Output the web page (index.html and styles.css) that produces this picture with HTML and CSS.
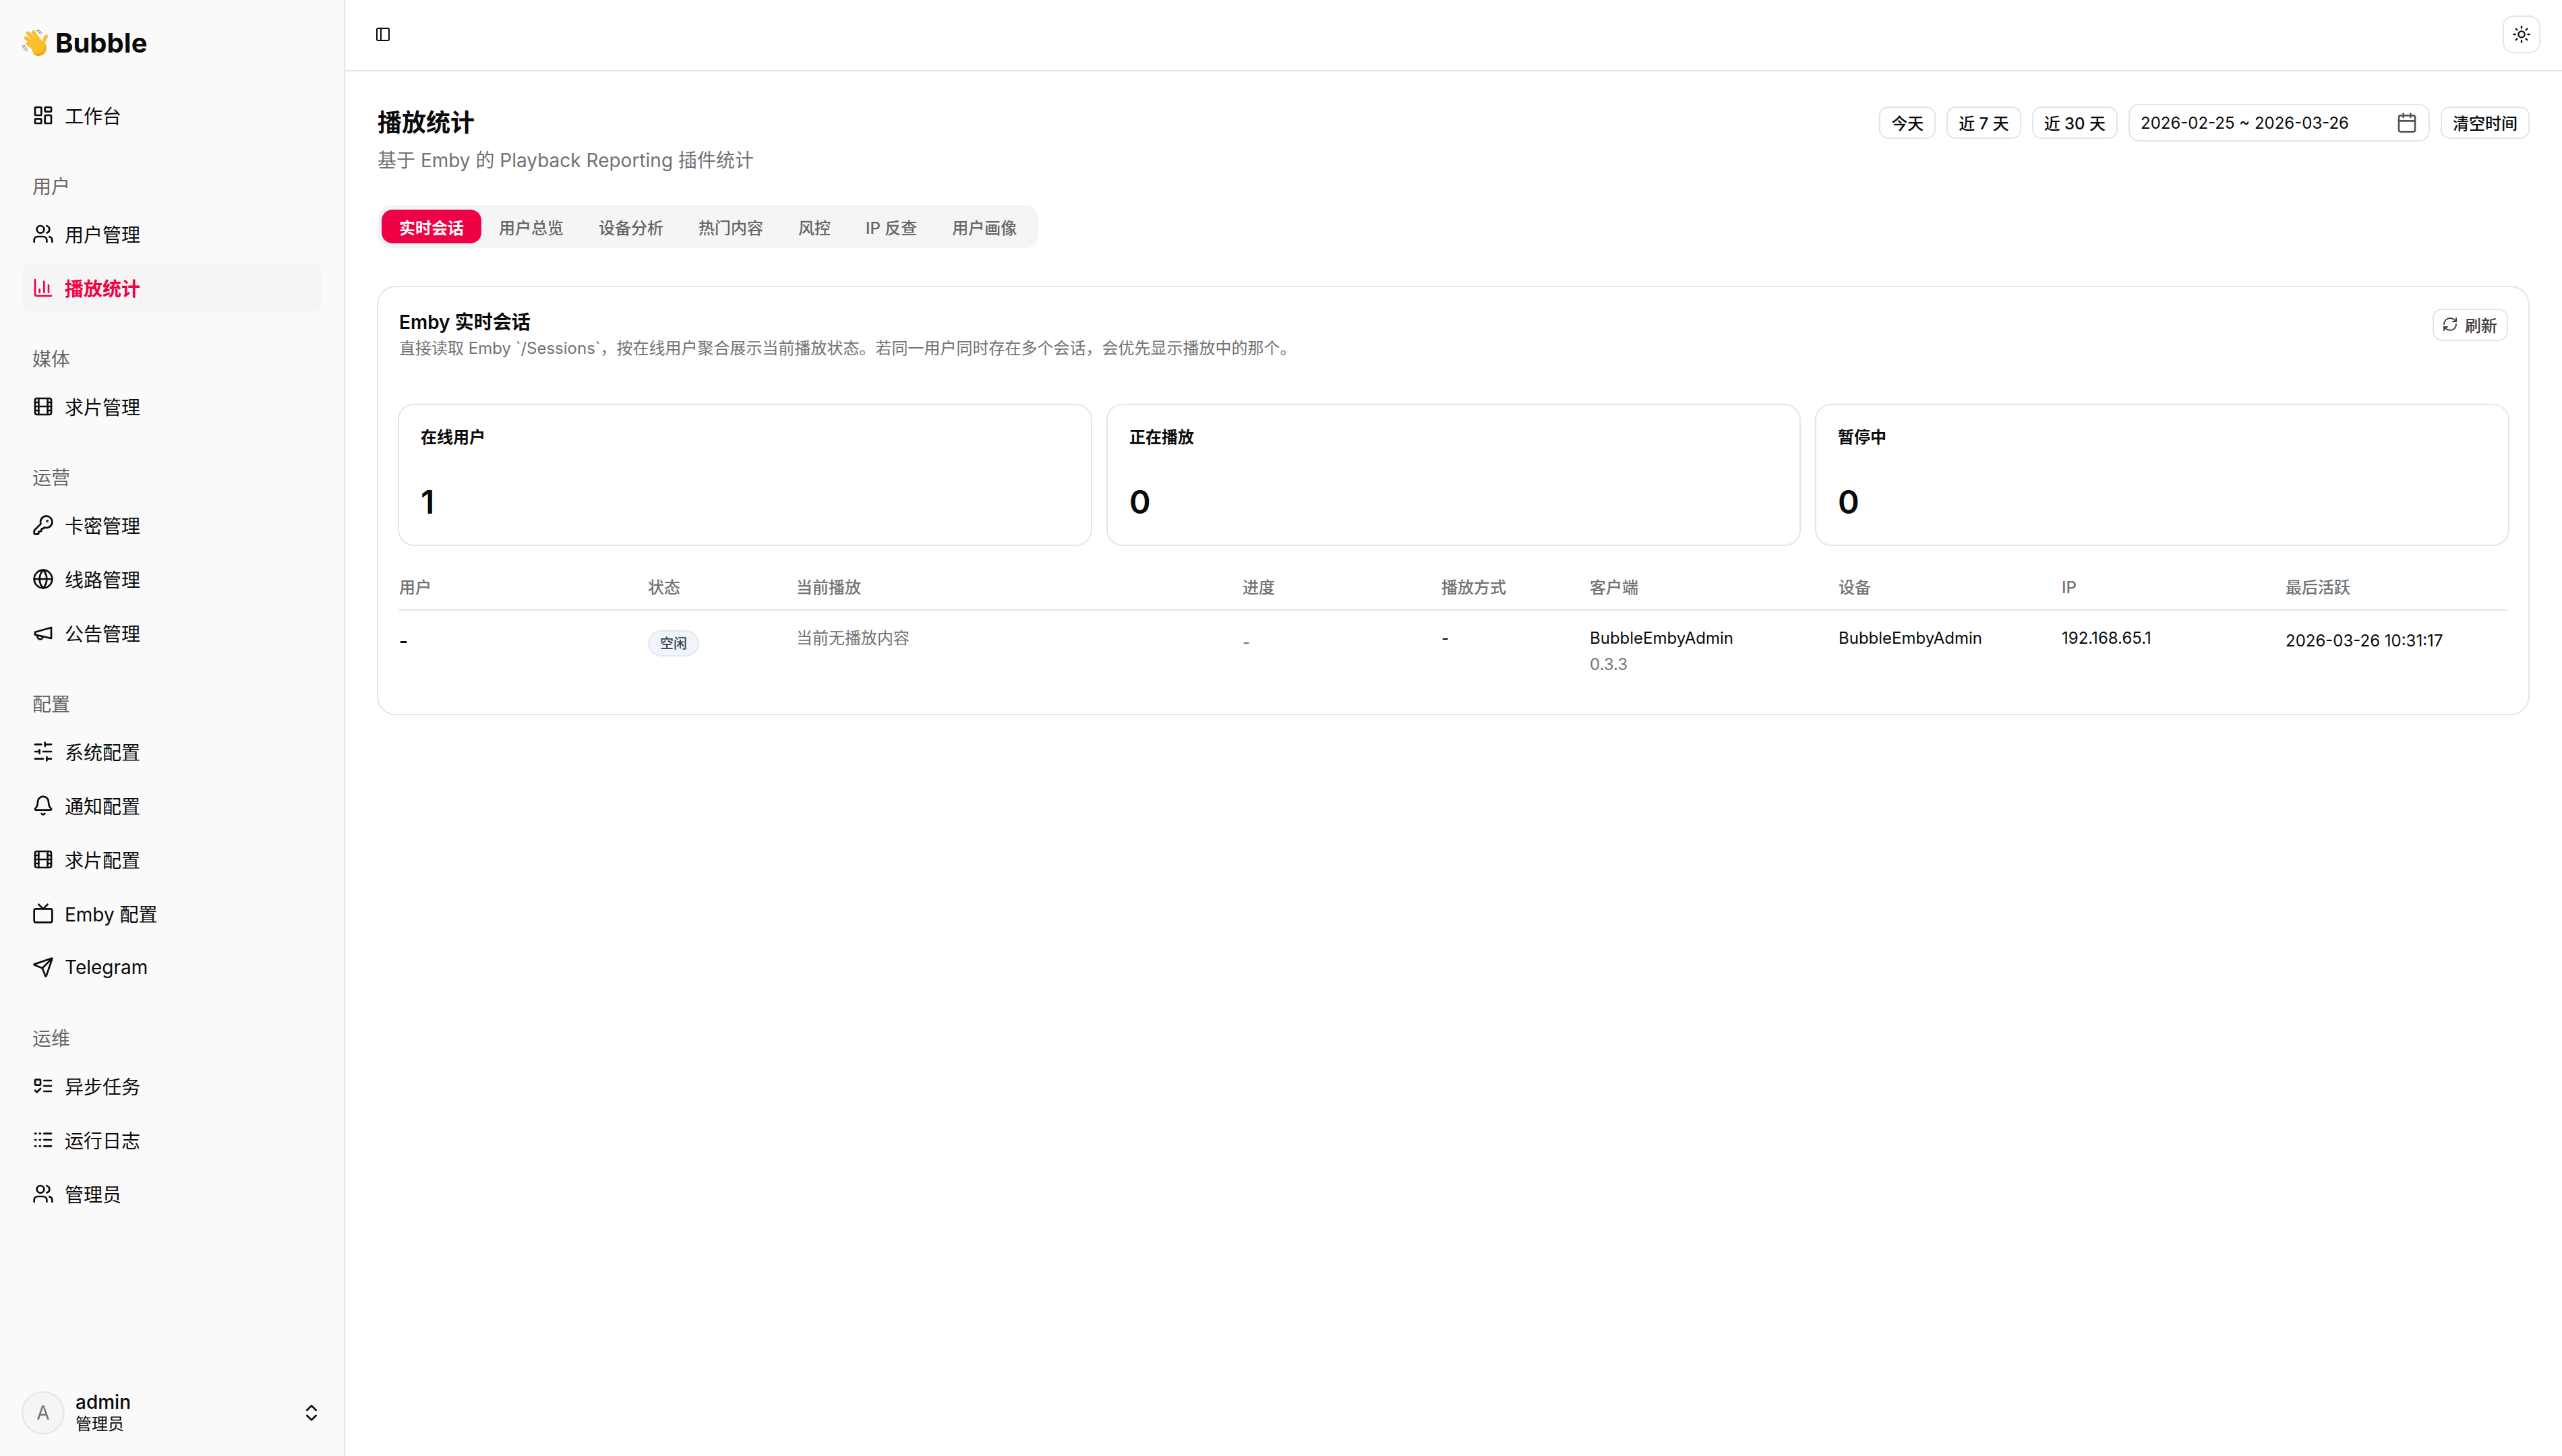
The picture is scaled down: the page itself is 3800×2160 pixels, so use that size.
FILE: index.html
```html
<!DOCTYPE html>
<html lang="zh-CN">
<head>
<meta charset="utf-8">
<title>播放统计</title>
<link rel="stylesheet" href="styles.css">
</head>
<body>
<svg class="sprite" aria-hidden="true">
  <symbol id="i-dash" viewBox="0 0 24 24"><rect width="7" height="9" x="3" y="3" rx="1"/><rect width="7" height="5" x="14" y="3" rx="1"/><rect width="7" height="9" x="14" y="12" rx="1"/><rect width="7" height="5" x="3" y="16" rx="1"/></symbol>
  <symbol id="i-users" viewBox="0 0 24 24"><path d="M16 21v-2a4 4 0 0 0-4-4H6a4 4 0 0 0-4 4v2"/><circle cx="9" cy="7" r="4"/><path d="M22 21v-2a4 4 0 0 0-3-3.87"/><path d="M16 3.13a4 4 0 0 1 0 7.75"/></symbol>
  <symbol id="i-chart" viewBox="0 0 24 24"><path d="M3 3v16a2 2 0 0 0 2 2h16"/><path d="M18 17V9"/><path d="M13 17V5"/><path d="M8 17v-3"/></symbol>
  <symbol id="i-film" viewBox="0 0 24 24"><rect width="18" height="18" x="3" y="3" rx="2"/><path d="M7 3v18"/><path d="M3 7.5h4"/><path d="M3 12h18"/><path d="M3 16.5h4"/><path d="M17 3v18"/><path d="M17 7.5h4"/><path d="M17 16.5h4"/></symbol>
  <symbol id="i-key" viewBox="0 0 24 24"><path d="M2.586 17.414A2 2 0 0 0 2 18.828V21a1 1 0 0 0 1 1h3a1 1 0 0 0 1-1v-1a1 1 0 0 1 1-1h1a1 1 0 0 0 1-1v-1a1 1 0 0 1 1-1h.172a2 2 0 0 0 1.414-.586l.814-.814a6.5 6.5 0 1 0-4-4z"/><circle cx="16.5" cy="7.5" r=".5" fill="currentColor"/></symbol>
  <symbol id="i-globe" viewBox="0 0 24 24"><circle cx="12" cy="12" r="10"/><path d="M12 2a14.5 14.5 0 0 0 0 20 14.5 14.5 0 0 0 0-20"/><path d="M2 12h20"/></symbol>
  <symbol id="i-mega" viewBox="0 0 24 24"><path d="m3 11 18-5v12L3 14v-3z"/><path d="M11.6 16.8a3 3 0 1 1-5.8-1.6"/></symbol>
  <symbol id="i-sliders" viewBox="0 0 24 24"><path d="M21 4h-7"/><path d="M10 4H3"/><path d="M21 12h-9"/><path d="M8 12H3"/><path d="M21 20h-5"/><path d="M12 20H3"/><path d="M14 2v4"/><path d="M8 10v4"/><path d="M16 18v4"/></symbol>
  <symbol id="i-bell" viewBox="0 0 24 24"><path d="M10.268 21a2 2 0 0 0 3.464 0"/><path d="M3.262 15.326A1 1 0 0 0 4 17h16a1 1 0 0 0 .74-1.673C19.41 13.956 18 12.499 18 8A6 6 0 0 0 6 8c0 4.499-1.411 5.956-2.738 7.326"/></symbol>
  <symbol id="i-tv" viewBox="0 0 24 24"><path d="m17 2-5 5-5-5"/><rect width="20" height="15" x="2" y="7" rx="2"/></symbol>
  <symbol id="i-send" viewBox="0 0 24 24"><path d="M14.536 21.686a.5.5 0 0 0 .937-.024l6.5-19a.496.496 0 0 0-.635-.635l-19 6.5a.5.5 0 0 0-.024.937l7.93 3.18a2 2 0 0 1 1.112 1.11z"/><path d="m21.854 2.147-10.94 10.939"/></symbol>
  <symbol id="i-todo" viewBox="0 0 24 24"><rect x="3" y="5" width="6" height="6" rx="1"/><path d="m3 17 2 2 4-4"/><path d="M13 6h8"/><path d="M13 12h8"/><path d="M13 18h8"/></symbol>
  <symbol id="i-logs" viewBox="0 0 24 24"><path d="M3 5h1"/><path d="M3 12h1"/><path d="M3 19h1"/><path d="M8 5h1"/><path d="M8 12h1"/><path d="M8 19h1"/><path d="M13 5h8"/><path d="M13 12h8"/><path d="M13 19h8"/></symbol>
  <symbol id="i-updown" viewBox="0 0 24 24"><path d="m7 15 5 5 5-5"/><path d="m7 9 5-5 5 5"/></symbol>
  <symbol id="i-panel" viewBox="0 0 24 24"><rect width="18" height="18" x="3" y="3" rx="2"/><path d="M9 3v18"/></symbol>
  <symbol id="i-sun" viewBox="0 0 24 24"><circle cx="12" cy="12" r="4"/><path d="M12 2v2"/><path d="M12 20v2"/><path d="m4.93 4.93 1.41 1.41"/><path d="m17.66 17.66 1.41 1.41"/><path d="M2 12h2"/><path d="M20 12h2"/><path d="m6.34 17.66-1.41 1.41"/><path d="m19.07 4.93-1.41 1.41"/></symbol>
  <symbol id="i-cal" viewBox="0 0 24 24"><path d="M8 2v4"/><path d="M16 2v4"/><rect width="18" height="18" x="3" y="4" rx="2"/><path d="M3 10h18"/></symbol>
  <symbol id="i-refresh" viewBox="0 0 24 24"><path d="M3 12a9 9 0 0 1 9-9 9.75 9.75 0 0 1 6.74 2.74L21 8"/><path d="M21 3v5h-5"/><path d="M21 12a9 9 0 0 1-9 9 9.75 9.75 0 0 1-6.74-2.74L3 16"/><path d="M8 16H3v5"/></symbol>
</svg>
<div class="app">
  <aside class="sidebar">
    <div class="brand">
      <svg class="wave" viewBox="24 24 126 126" aria-hidden="true">
        <g class="wave-fingers">
          <path d="M134 60Q122 76 119 100" stroke-width="15"/>
          <path d="M76 42L110 88"/>
          <path d="M52 46L97 92"/>
          <path d="M44 68L88 104"/>
          <path d="M52 92L86 118"/>
        </g>
        <ellipse class="wave-palm" cx="102" cy="112" rx="33" ry="35"/>
        <path class="wave-shade" d="M131 96C136 120 122 146 97 147 88 147 80 143 74 136 96 142 124 130 131 96Z"/>
        <path class="wave-lines" d="M90 33Q102 37 108 50M97 30Q108 34 114 46M28 101Q33 116 47 126M34 97Q38 110 51 119"/>
      </svg>
      <span class="brand-name">Bubble</span>
    </div>
    <nav class="nav">
      <a class="item"><svg class="ico"><use href="#i-dash"/></svg>工作台</a>
      <div class="group">
        <div class="label">用户</div>
        <a class="item"><svg class="ico"><use href="#i-users"/></svg>用户管理</a>
        <a class="item active"><svg class="ico"><use href="#i-chart"/></svg>播放统计</a>
      </div>
      <div class="group">
        <div class="label">媒体</div>
        <a class="item"><svg class="ico"><use href="#i-film"/></svg>求片管理</a>
      </div>
      <div class="group">
        <div class="label">运营</div>
        <a class="item"><svg class="ico"><use href="#i-key"/></svg>卡密管理</a>
        <a class="item"><svg class="ico"><use href="#i-globe"/></svg>线路管理</a>
        <a class="item"><svg class="ico"><use href="#i-mega"/></svg>公告管理</a>
      </div>
      <div class="group">
        <div class="label">配置</div>
        <a class="item"><svg class="ico"><use href="#i-sliders"/></svg>系统配置</a>
        <a class="item"><svg class="ico"><use href="#i-bell"/></svg>通知配置</a>
        <a class="item"><svg class="ico"><use href="#i-film"/></svg>求片配置</a>
        <a class="item"><svg class="ico"><use href="#i-tv"/></svg>Emby 配置</a>
        <a class="item"><svg class="ico"><use href="#i-send"/></svg>Telegram</a>
      </div>
      <div class="group">
        <div class="label">运维</div>
        <a class="item"><svg class="ico"><use href="#i-todo"/></svg>异步任务</a>
        <a class="item"><svg class="ico"><use href="#i-logs"/></svg>运行日志</a>
        <a class="item"><svg class="ico"><use href="#i-users"/></svg>管理员</a>
      </div>
    </nav>
    <div class="user">
      <div class="avatar">A</div>
      <div class="user-text">
        <div class="user-name">admin</div>
        <div class="user-role">管理员</div>
      </div>
      <svg class="ico"><use href="#i-updown"/></svg>
    </div>
  </aside>
  <div class="main">
    <header class="topbar">
      <svg class="ico panel"><use href="#i-panel"/></svg>
      <button class="theme"><svg class="ico sun"><use href="#i-sun"/></svg></button>
    </header>
    <main class="content">
      <div class="page-head">
        <div>
          <h1 class="title">播放统计</h1>
          <p class="subtitle">基于 Emby 的 Playback Reporting 插件统计</p>
        </div>
        <div class="tools">
          <button class="btn">今天</button>
          <button class="btn">近 7 天</button>
          <button class="btn">近 30 天</button>
          <div class="date"><span>2026-02-25 ~ 2026-03-26</span><svg class="ico cal"><use href="#i-cal"/></svg></div>
          <button class="btn">清空时间</button>
        </div>
      </div>
      <div class="tabs">
        <span class="tab on">实时会话</span>
        <span class="tab">用户总览</span>
        <span class="tab">设备分析</span>
        <span class="tab">热门内容</span>
        <span class="tab">风控</span>
        <span class="tab">IP 反查</span>
        <span class="tab">用户画像</span>
      </div>
      <section class="card">
        <div class="card-head">
          <div>
            <h2 class="card-title">Emby 实时会话</h2>
            <p class="card-desc">直接读取 Emby `/Sessions`，按在线用户聚合展示当前播放状态。若同一用户同时存在多个会话，会优先显示播放中的那个。</p>
          </div>
          <button class="btn refresh"><svg class="ico rf"><use href="#i-refresh"/></svg>刷新</button>
        </div>
        <div class="stats">
          <div class="stat"><div class="stat-label">在线用户</div><div class="stat-value">1</div></div>
          <div class="stat"><div class="stat-label">正在播放</div><div class="stat-value">0</div></div>
          <div class="stat"><div class="stat-label">暂停中</div><div class="stat-value">0</div></div>
        </div>
        <div class="table">
          <div class="row head">
            <div>用户</div><div>状态</div><div>当前播放</div><div>进度</div><div>播放方式</div><div>客户端</div><div>设备</div><div>IP</div><div>最后活跃</div>
          </div>
          <div class="row body">
            <div class="c-user">-</div>
            <div class="c-badge"><span class="badge">空闲</span></div>
            <div class="muted">当前无播放内容</div>
            <div class="muted c-prog">-</div>
            <div>-</div>
            <div>BubbleEmbyAdmin<div class="muted ver">0.3.3</div></div>
            <div>BubbleEmbyAdmin</div>
            <div>192.168.65.1</div>
            <div class="c-time">2026-03-26 10:31:17</div>
          </div>
        </div>
      </section>
    </main>
  </div>
</div>
</body>
</html>
```
FILE: styles.css
```css
* { box-sizing: border-box; }
html, body { margin: 0; height: 100%; }
body {
  font-family: Inter, "Noto Sans CJK SC", sans-serif;
  color: #0a0a0a;
  background: #fff;
}
.sprite { display: none; }
.ico {
  width: 32px;
  height: 32px;
  flex: none;
  fill: none;
  stroke: currentColor;
  stroke-width: 2;
  stroke-linecap: round;
  stroke-linejoin: round;
}
.app { display: flex; height: 2160px; }

.sidebar {
  width: 512px;
  flex: none;
  display: flex;
  flex-direction: column;
  background: #fafafa;
  border-right: 2px solid #e5e5e5;
  padding: 0 32px;
}
.brand {
  display: flex;
  align-items: center;
  gap: 8px;
  height: 62px;
  margin-top: 32px;
}
.wave { width: 42px; height: 42px; flex: none; }
.wave-fingers { fill: none; stroke: #fbbf2c; stroke-width: 17; stroke-linecap: round; }
.wave-palm { fill: #fbbf2c; }
.wave-shade { fill: #f2a51f; }
.wave-lines { fill: none; stroke: #5f5f5f; stroke-width: 3; stroke-linecap: round; }
.brand-name { font-size: 40px; font-weight: 700; }
.nav { margin-top: 41px; display: flex; flex-direction: column; flex: 1; }
.group { margin-top: 36px; display: flex; flex-direction: column; gap: 8px; }
.label {
  height: 64px;
  margin-bottom: -4px;
  padding-left: 16px;
  display: flex;
  align-items: center;
  font-size: 28px;
  color: #666;
}
.item {
  display: flex;
  align-items: center;
  gap: 16px;
  height: 72px;
  padding: 0 16px;
  border-radius: 16px;
  font-size: 28px;
  color: #0a0a0a;
}
.item.active {
  background: #f5f5f5;
  color: #f00044;
  font-weight: 600;
}
.user { display: flex; align-items: center; height: 64px; margin-bottom: 32px; }
.avatar {
  width: 64px;
  height: 64px;
  border-radius: 50%;
  background: #f5f5f5;
  border: 2px solid #e5e5e5;
  display: flex;
  align-items: center;
  justify-content: center;
  font-size: 28px;
  color: #737373;
  flex: none;
}
.user-text { margin-left: 16px; flex: 1; }
.user-name { font-size: 28px; font-weight: 500; line-height: 34px; }
.user-role { font-size: 24px; line-height: 32px; }

.main { flex: 1; min-width: 0; display: flex; flex-direction: column; }
.topbar {
  height: 106px;
  border-bottom: 2px solid #e5e5e5;
  display: flex;
  align-items: center;
  justify-content: space-between;
  padding: 0 32px 2px 44px;
}
.panel { width: 24px; height: 24px; }
.theme {
  width: 56px;
  height: 56px;
  padding: 0;
  background: #fff;
  border: 2px solid #e5e5e5;
  border-radius: 16px;
  display: flex;
  align-items: center;
  justify-content: center;
  color: #0a0a0a;
}
.sun { width: 28px; height: 28px; }

.content { padding: 48px 48px 0; }
.page-head { display: flex; justify-content: space-between; align-items: flex-start; }
.title { margin: 0; font-size: 36px; font-weight: 700; line-height: 56px; }
.subtitle { margin: 0; font-size: 28px; line-height: 40px; color: #737373; margin-top: 8px; }
.tools { display: flex; align-items: center; gap: 16px; height: 56px; }
.btn {
  height: 48px;
  padding: 0 16px 2px;
  background: #fff;
  border: 2px solid #e5e5e5;
  border-radius: 14px;
  font: inherit;
  font-size: 24px;
  font-weight: 500;
  color: #0a0a0a;
  display: flex;
  align-items: center;
}
.date {
  width: 447px;
  height: 56px;
  border: 2px solid #e5e5e5;
  border-radius: 16px;
  padding: 0 16px;
  display: flex;
  align-items: center;
  justify-content: space-between;
  font-size: 24px;
}
.cal { width: 32px; height: 32px; color: #555; }

.tabs {
  margin-top: 46px;
  display: inline-flex;
  padding: 7px 6px;
  background: #f5f5f5;
  border-radius: 20px;
  height: 64px;
  align-items: center;
}
.tab {
  height: 50px;
  padding: 0 26px;
  border-radius: 16px;
  font-size: 24px;
  font-weight: 500;
  color: #666;
  display: flex;
  align-items: center;
}
.tab.on { background: #f00044; color: #fff; font-weight: 600; }

.card {
  margin: 56px 0 0 -1px;
  height: 637px;
  border: 2px solid #e5e5e5;
  border-radius: 28px;
  padding: 32px 28px 30px 29px;
}
.card-head { display: flex; justify-content: space-between; align-items: flex-start; padding: 0 2px; }
.card-title { margin: 0; font-size: 28px; font-weight: 600; line-height: 40px; }
.card-desc { margin: 2px 0 0; font-size: 24px; line-height: 34px; color: #737373; }
.refresh { gap: 10px; padding: 0 14px 2px 12px; color: #404040; }
.rf { width: 24px; height: 24px; }
.stats {
  margin-top: 65px;
  display: grid;
  grid-template-columns: repeat(3, 1fr);
  gap: 21px;
}
.stat {
  height: 211px;
  border: 2px solid #e5e5e5;
  border-radius: 24px;
  padding: 32px;
}
.stat-label { font-size: 24px; font-weight: 600; line-height: 32px; }
.stat-value { font-size: 48px; font-weight: 600; line-height: 60px; margin-top: 50px; }

.table { margin: 0 2px; }
.row {
  display: grid;
  grid-template-columns: 369px 220px 662px 295px 220px 369px 331px 332px 1fr;
  font-size: 24px;
}
.head {
  margin-top: 40px;
  height: 56px;
  line-height: 44px;
  color: #737373;
  font-weight: 500;
  border-bottom: 2px solid #e5e5e5;
}
.body { padding-top: 24px; line-height: 34px; }
.muted { color: #737373; }
.c-user { font-size: 28px; font-weight: 600; margin-top: 4px; }
.c-badge { margin-top: 5px; }
.badge {
  display: inline-flex;
  align-items: center;
  height: 39px;
  padding: 0 16px;
  border: 2px solid #e2e8f0;
  background: #f1f5f9;
  border-radius: 20px;
  font-size: 20px;
  font-weight: 500;
  color: #334155;
}
.c-prog { margin-top: 6px; }
.ver { margin-top: 5px; }
.c-time { margin-top: 4px; }
```
